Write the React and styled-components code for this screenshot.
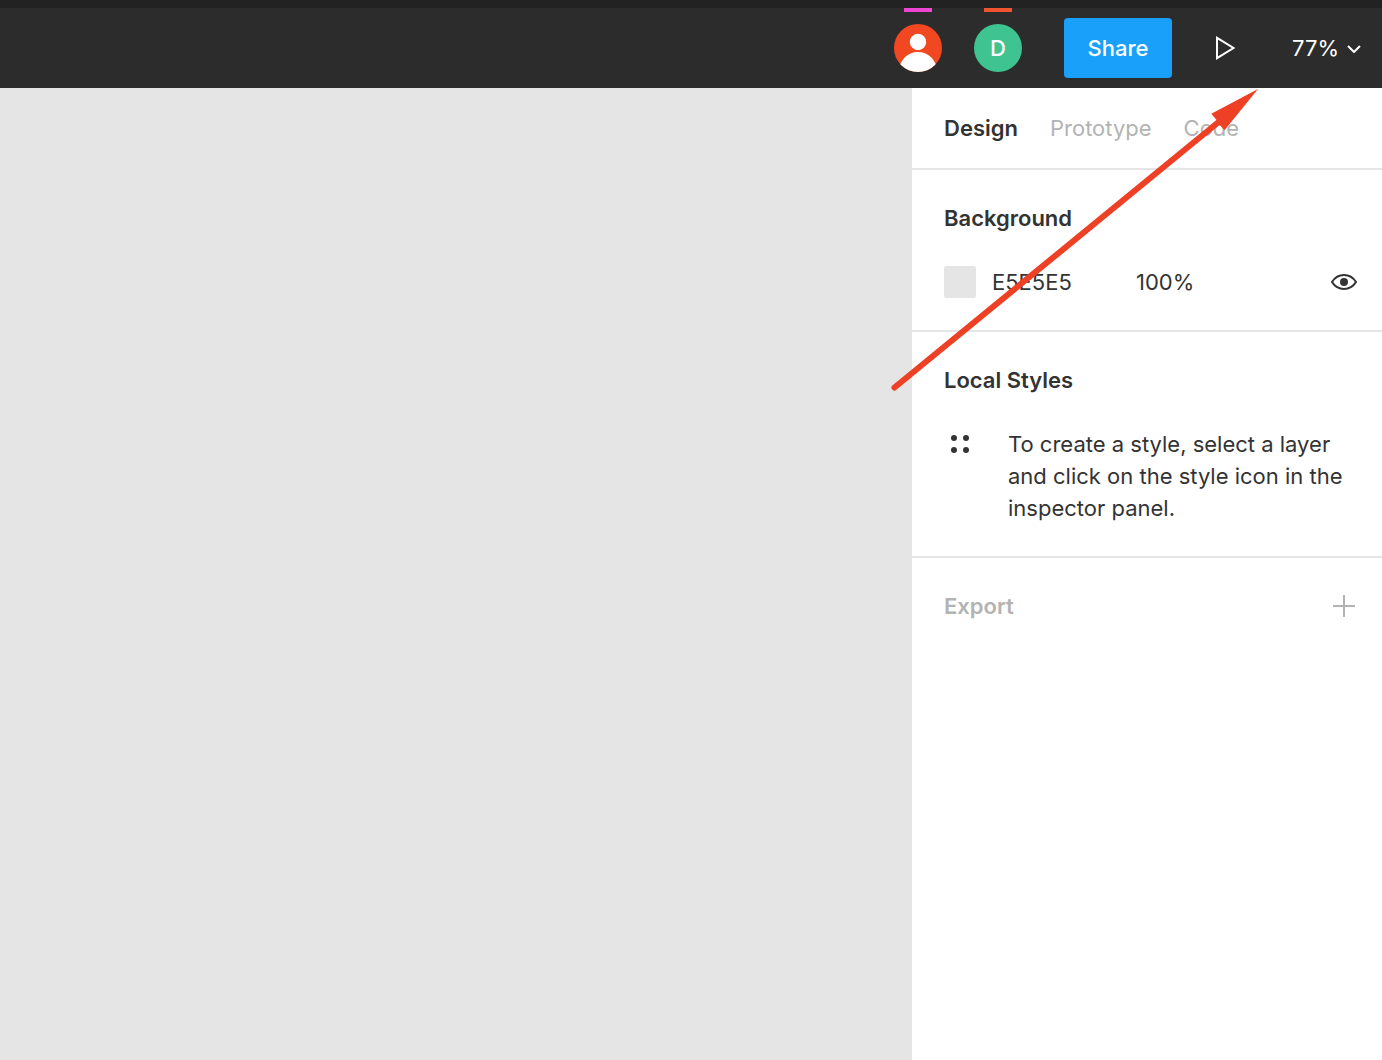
import React from 'react';
import styled, { createGlobalStyle } from 'styled-components';

const GlobalStyle = createGlobalStyle`
  *, *::before, *::after { box-sizing: border-box; }
  body {
    margin: 0;
    color: #333;
    font: 400 22px/32px Inter, "Liberation Sans", sans-serif;
  }
  button, input, select {
    margin: 0;
    padding: 0;
    border: 0;
    background: none;
    color: inherit;
    font: inherit;
  }
  button, select { cursor: pointer; }
  svg { display: block; flex: none; }
`;

const Page = styled.div`
  display: flex;
  flex-direction: column;
  min-height: 100vh;
`;

const Toolbar = styled.header`
  display: flex;
  justify-content: flex-end;
  align-items: center;
  height: 88px;
  padding-right: 21px;
  border-top: 8px solid #222;
  background: #2c2c2c;
  color: #fff;
`;

const Person = styled.div`
  display: flex;
  flex-direction: column;
  align-items: center;
  align-self: stretch;
  gap: 12px;
  width: 80px;

  &::before {
    content: "";
    width: 28px;
    height: 4px;
    background: ${(p) => p.$marker};
  }
`;

const Avatar = styled.div`
  display: flex;
  justify-content: center;
  align-items: center;
  width: 48px;
  height: 48px;
  border-radius: 50%;
  overflow: hidden;
  background: ${(p) => p.$color};
  font-weight: 500;
`;

const ShareButton = styled.button`
  min-width: 108px;
  height: 60px;
  margin-left: 26px;
  border-radius: 4px;
  background: #18a0fb;
  font-weight: 500;
`;

const PlayButton = styled.button`
  display: flex;
  justify-content: center;
  align-items: center;
  width: 80px;
  height: 80px;
  margin: 0 28px 0 12px;
`;

const ZoomControl = styled.label`
  display: flex;
  align-items: center;
  gap: 8px;
`;

const ZoomSelect = styled.select`
  appearance: none;
  field-sizing: content;
  option { color: #333; }
`;

const Workspace = styled.div`
  display: flex;
  flex: 1;
`;

const Canvas = styled.main`
  flex: 1;
  background: #e5e5e5;
`;

const Panel = styled.aside`
  position: relative;
  width: 470px;
  background: #fff;
`;

const Tabs = styled.div`
  display: flex;
  align-items: center;
  gap: 32px;
  height: 82px;
  padding: 0 32px;
  border-bottom: 2px solid #e5e5e5;
`;

const Tab = styled.button`
  color: ${(p) => (p.$active ? '#333' : '#b3b3b3')};
  font-weight: ${(p) => (p.$active ? 600 : 400)};
`;

const Section = styled.section`
  display: flex;
  flex-direction: column;
  gap: 32px;
  padding: 32px 22px 32px 32px;
  border-bottom: ${(p) => (p.$last ? '0' : '2px solid #e5e5e5')};
`;

const Title = styled.h2`
  flex: 1;
  margin: 0;
  color: ${(p) => (p.$muted ? '#b3b3b3' : '#333')};
  font-size: 22px;
  font-weight: 600;
`;

const Row = styled.div`
  display: flex;
  align-items: center;
`;

const Swatch = styled.button`
  width: 32px;
  height: 32px;
  border-radius: 2px;
  background: #e5e5e5;
`;

const HexInput = styled.input`
  width: 128px;
  height: 32px;
  margin: 0 16px;
`;

const OpacityInput = styled.input`
  width: 80px;
  height: 32px;
`;

const IconButton = styled.button`
  display: flex;
  justify-content: center;
  align-items: center;
  width: 32px;
  height: 32px;
  margin-left: auto;
`;

const Hint = styled.div`
  display: flex;
  gap: 32px;
`;

const HintText = styled.p`
  flex: 1;
  margin: 0;
`;

const Arrow = styled.svg`
  position: absolute;
  top: 0;
  left: -24px;
  pointer-events: none;
`;

const PersonIcon = () => (
  <svg width="48" height="48" viewBox="0 0 48 48" fill="#fff" aria-hidden="true">
    <circle cx="24" cy="18" r="8.2" />
    <path d="M4 48C6 36 13 28 24 28s18 8 20 20z" />
  </svg>
);

const PlayIcon = () => (
  <svg width="24" height="24" viewBox="0 0 24 24" fill="none" stroke="#fff" strokeWidth="2" aria-hidden="true">
    <path d="M5 1.8v20.4L21.500 12z" />
  </svg>
);

const ChevronIcon = () => (
  <svg width="14" height="10" viewBox="0 0 14 10" fill="none" stroke="#fff" strokeWidth="2" aria-hidden="true">
    <path d="M1 3l6 6 6-6" />
  </svg>
);

const EyeIcon = () => (
  <svg width="28" height="18" viewBox="0 0 28 18" aria-hidden="true">
    <path
      d="M2 9C4.8 4.5 9 2 14 2s9.200 2.500 12 7c-2.800 4.500-7 7-12 7S4.800 13.500 2 9z"
      fill="none"
      stroke="#333"
      strokeWidth="2"
    />
    <circle cx="14" cy="9" r="4" fill="#333" />
  </svg>
);

const StylesIcon = () => (
  <svg width="32" height="32" viewBox="0 0 32 32" fill="#333" aria-hidden="true">
    <circle cx="10" cy="10" r="3" />
    <circle cx="22" cy="10" r="3" />
    <circle cx="10" cy="22" r="3" />
    <circle cx="22" cy="22" r="3" />
  </svg>
);

const PlusIcon = () => (
  <svg width="22" height="22" viewBox="0 0 22 22" stroke="#b3b3b3" strokeWidth="2" aria-hidden="true">
    <path d="M11 0v22M0 11h22" />
  </svg>
);

const tabs = ['Design', 'Prototype', 'Code'];

export default function App() {
  const [active, setActive] = React.useState('Design');

  return (
    <Page>
      <GlobalStyle />
      <Toolbar>
        <Person $marker="#ee46d3">
          <Avatar $color="#f24822"><PersonIcon /></Avatar>
        </Person>
        <Person $marker="#f05431">
          <Avatar $color="#3fc391">D</Avatar>
        </Person>
        <ShareButton type="button">Share</ShareButton>
        <PlayButton type="button" aria-label="Present"><PlayIcon /></PlayButton>
        <ZoomControl>
          <ZoomSelect aria-label="Zoom" defaultValue="77%">
            <option>50%</option>
            <option>77%</option>
            <option>100%</option>
          </ZoomSelect>
          <ChevronIcon />
        </ZoomControl>
      </Toolbar>
      <Workspace>
        <Canvas />
        <Panel>
          <Tabs role="tablist">
            {tabs.map((name) => (
              <Tab
                key={name}
                type="button"
                role="tab"
                aria-selected={name === active}
                $active={name === active}
                onClick={() => setActive(name)}
              >
                {name}
              </Tab>
            ))}
          </Tabs>
          <Section>
            <Title>Background</Title>
            <Row>
              <Swatch type="button" aria-label="Pick background color" />
              <HexInput aria-label="Background color" defaultValue="E5E5E5" />
              <OpacityInput aria-label="Background opacity" defaultValue="100%" />
              <IconButton type="button" aria-label="Toggle background"><EyeIcon /></IconButton>
            </Row>
          </Section>
          <Section>
            <Title>Local Styles</Title>
            <Hint>
              <StylesIcon />
              <HintText>
                To create a style, select a layer and click on the style icon in the inspector panel.
              </HintText>
            </Hint>
          </Section>
          <Section $last>
            <Row>
              <Title $muted>Export</Title>
              <IconButton type="button" aria-label="Add export"><PlusIcon /></IconButton>
            </Row>
          </Section>
          <Arrow width="372" height="304" viewBox="0 0 372 304" fill="#ee4025" aria-hidden="true">
            <path d="M6.500 299.500L330 34.500" stroke="#ee4025" strokeWidth="6" strokeLinecap="round" />
            <path d="M370 1L323.300 25.700 329 32.500 331.500 36.500 336.500 42.300z" />
          </Arrow>
        </Panel>
      </Workspace>
    </Page>
  );
}
